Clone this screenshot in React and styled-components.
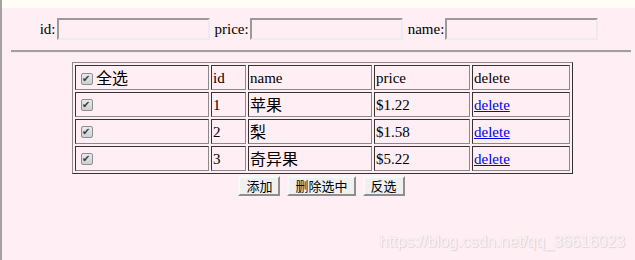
import React, { useState } from "react";
import styled, { createGlobalStyle } from "styled-components";

const GlobalStyle = createGlobalStyle`
  html, body {
    margin: 0;
    padding: 0;
    background: #fffdf6;
  }
  body {
    font-family: "Liberation Serif", "Noto Sans CJK SC", serif;
    font-size: 15px;
    color: #000;
  }
`;

const Frame = styled.div`
  width: 635px;
  height: 260px;
  box-sizing: border-box;
  padding-top: 8px;
  border-left: 2px solid #a3a3a3;
  background: #fffdf6;
`;

const Panel = styled.div`
  position: relative;
  height: 252px;
  box-sizing: border-box;
  padding: 10px 4px 0 9px;
  background: #ffeef3;
`;

const SearchRow = styled.div`
  display: flex;
  justify-content: center;
  align-items: center;
  gap: 5px;
  padding-right: 4px;
`;

const Field = styled.label`
  display: flex;
  align-items: center;
  line-height: 22px;
`;

const TextInput = styled.input`
  width: 153px;
  height: 22px;
  box-sizing: border-box;
  margin: 0 0 0 1px;
  padding: 0 2px;
  background: transparent;
  border: 2px solid;
  border-color: #9a9a9a #ececec #ececec #9a9a9a;
  font: inherit;
  outline: none;
`;

const Rule = styled.hr`
  margin: 10px 0 0 0;
  height: 0;
  border: 0;
  border-top: 2px solid #a0a0a0;
  border-bottom: 1px solid #f6e8ec;
`;

const Grid = styled.table`
  width: 501px;
  margin: 9px 0 0 61px;
  table-layout: fixed;
  border-collapse: separate;
  border-spacing: 2px;
  border: 1px solid;
  border-color: #8a8a8a #333 #333 #8a8a8a;
`;

const Cell = styled.td`
  height: 25px;
  box-sizing: border-box;
  padding: 0 1px;
  border: 1px solid;
  border-color: #333 #8a8a8a #8a8a8a #333;
  line-height: 16px;
  vertical-align: middle;
  white-space: nowrap;
  overflow: hidden;
`;

const Cjk = styled.span`
  font-family: "Noto Sans CJK SC", sans-serif;
  font-size: 16px;
  line-height: 16px;
`;

const Check = styled.input.attrs({ type: "checkbox" })`
  appearance: none;
  position: relative;
  width: 12px;
  height: 12px;
  margin: 0 3px 0 4px;
  vertical-align: -1px;
  border: 1px solid #8e8e8e;
  border-radius: 2px;
  background: linear-gradient(#eaeaea, #cfcfcf);
  &:checked::before {
    content: "✔";
    position: absolute;
    left: 0px;
    top: -2px;
    font-family: "DejaVu Sans", sans-serif;
    font-size: 10px;
    line-height: 14px;
    color: #3a3a3a;
  }
`;

const DeleteLink = styled.a`
  color: #0000ee;
  text-decoration: underline;
  cursor: pointer;
`;

const Actions = styled.div`
  display: flex;
  justify-content: center;
  gap: 7px;
  margin-top: 2px;
  padding-left: 1px;
`;

const Button = styled.button`
  height: 20px;
  box-sizing: border-box;
  padding: 0 6px;
  border: 2px solid;
  border-color: #f8f8f8 #8e8e8e #8e8e8e #f8f8f8;
  background: #f0f0f0;
  font-family: "Noto Sans CJK SC", sans-serif;
  font-size: 13px;
  line-height: 16px;
  color: #000;
  cursor: pointer;
`;

const Watermark = styled.div`
  position: absolute;
  right: 10px;
  bottom: 9px;
  font-family: "Liberation Sans", Arial, sans-serif;
  font-size: 16px;
  color: rgba(255, 255, 255, 0.85);
  text-shadow: 0 0 1px #d9c9cf, 1px 1px 1px #e3d3d9;
`;

const fruits = [
  { id: 1, name: "苹果", price: "$1.22" },
  { id: 2, name: "梨", price: "$1.58" },
  { id: 3, name: "奇异果", price: "$5.22" },
];

const App = () => {
  const [rows] = useState(fruits);
  const [checked, setChecked] = useState([true, true, true]);
  const all = checked.every(Boolean);

  return (
    <>
      <GlobalStyle />
      <Frame>
        <Panel>
          <SearchRow>
            <Field>id:<TextInput /></Field>
            <Field>price:<TextInput /></Field>
            <Field>name:<TextInput /></Field>
          </SearchRow>
          <Rule />
          <Grid>
            <colgroup>
              <col style={{ width: 134 }} />
              <col style={{ width: 35 }} />
              <col style={{ width: 124 }} />
              <col style={{ width: 96 }} />
              <col style={{ width: 98 }} />
            </colgroup>
            <tbody>
              <tr>
                <Cell>
                  <Check
                    checked={all}
                    onChange={() => setChecked(checked.map(() => !all))}
                  />
                  <Cjk>全选</Cjk>
                </Cell>
                <Cell>id</Cell>
                <Cell>name</Cell>
                <Cell>price</Cell>
                <Cell>delete</Cell>
              </tr>
              {rows.map((r, i) => (
                <tr key={r.id}>
                  <Cell>
                    <Check
                      checked={checked[i]}
                      onChange={() =>
                        setChecked(checked.map((c, j) => (j === i ? !c : c)))
                      }
                    />
                  </Cell>
                  <Cell>{r.id}</Cell>
                  <Cell><Cjk>{r.name}</Cjk></Cell>
                  <Cell>{r.price}</Cell>
                  <Cell><DeleteLink href="#">delete</DeleteLink></Cell>
                </tr>
              ))}
            </tbody>
          </Grid>
          <Actions>
            <Button>添加</Button>
            <Button>删除选中</Button>
            <Button>反选</Button>
          </Actions>
          <Watermark>https://blog.csdn.net/qq_36616023</Watermark>
        </Panel>
      </Frame>
    </>
  );
};

export default App;
